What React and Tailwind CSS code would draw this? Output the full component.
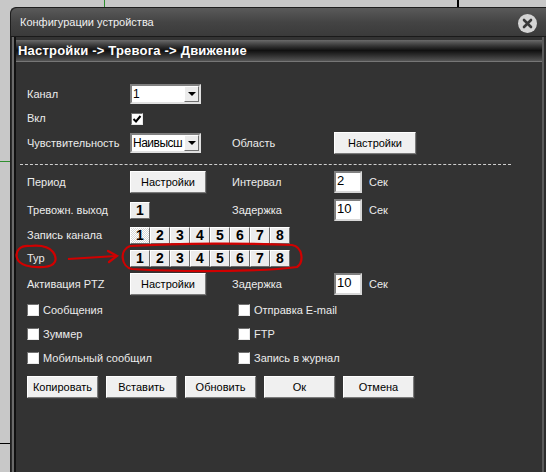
import React from "react";

const font = { fontFamily: '"Liberation Sans", Arial, sans-serif' };

function Btn({ children, className = "" }) {
  return (
    <div
      className={`flex items-center justify-center bg-[#f0f0f0] text-[11px] text-black border border-t-white border-l-white border-r-[#7a7a7a] border-b-[#7a7a7a] shadow-[1px_1px_0_#404040] ${className}`}
    >
      {children}
    </div>
  );
}

function Input({ value }) {
  return (
    <div className="w-[28px] h-[22px] bg-white border-2 border-t-[#808080] border-l-[#808080] border-r-[#d8d8d8] border-b-[#d8d8d8] text-[13px] text-black leading-[16px] pl-[1px]">
      {value}
    </div>
  );
}

function Select({ value }) {
  return (
    <div className="w-[71px] h-[20px] bg-white border-2 border-t-[#808080] border-l-[#808080] border-r-[#e0e0e0] border-b-[#e0e0e0] flex items-stretch">
      <div className="flex-1 text-[12px] tracking-[-0.5px] text-black leading-[16px] pl-[1px] overflow-hidden whitespace-nowrap">
        {value}
      </div>
      <div className="w-[15px] bg-[#ececec] border border-t-white border-l-white border-r-[#707070] border-b-[#707070] flex items-center justify-center">
        <div className="w-0 h-0 border-l-[4px] border-r-[4px] border-t-[4px] border-l-transparent border-r-transparent border-t-black" />
      </div>
    </div>
  );
}

function Check({ checked }) {
  return (
    <div className="w-[12px] h-[12px] bg-white border border-t-[#707070] border-l-[#707070] border-r-[#e8e8e8] border-b-[#e8e8e8] flex items-center justify-center">
      {checked && (
        <svg width="10" height="10" viewBox="0 0 10 10">
          <path d="M1.5 5 L4 7.5 L8.5 2" stroke="#000" strokeWidth="2" fill="none" />
        </svg>
      )}
    </div>
  );
}

function NumBtn({ n, pressed }) {
  return (
    <div
      className={`w-[20px] h-[17px] flex items-center justify-center text-[14px] font-bold text-black border border-t-white border-l-white border-r-[#6a6a6a] border-b-[#6a6a6a] ${
        pressed
          ? "bg-[conic-gradient(#ffffff_25%,#d6d6d6_0_50%,#ffffff_0_75%,#d6d6d6_0)] bg-[length:2px_2px]"
          : "bg-[#ececec]"
      }`}
    >
      {n}
    </div>
  );
}

function NumRow({ first }) {
  return (
    <div className="flex">
      {[1, 2, 3, 4, 5, 6, 7, 8].map((n) => (
        <NumBtn key={n} n={n} pressed={first && n === 1} />
      ))}
    </div>
  );
}

function Row({ h, label, children, label2, right }) {
  return (
    <div className={`flex items-center ${h}`}>
      <div className="w-[103px] text-[11px] text-[#ececec] whitespace-nowrap">{label}</div>
      <div className="w-[102px] flex items-center">{children}</div>
      {label2 !== undefined && (
        <>
          <div className="w-[102px] text-[11px] text-[#ececec]">{label2}</div>
          <div className="flex items-center gap-[7px] text-[11px] text-[#ececec]">{right}</div>
        </>
      )}
    </div>
  );
}

function CheckLabel({ label }) {
  return (
    <div className="flex items-center gap-[4px] text-[11px] text-[#ececec] whitespace-nowrap">
      <Check />
      {label}
    </div>
  );
}

export default function App() {
  return (
    <div className="relative w-[546px] h-[472px] bg-[#c8c8c8] overflow-hidden" style={font}>
      {/* desktop lines behind the window */}
      <div className="absolute left-[104px] top-0 w-[1px] h-[7px] bg-[#2f8f2f]" />
      <div className="absolute left-[457px] top-0 w-[2px] h-[7px] bg-black" />
      <div className="absolute left-0 top-[161px] w-[10px] h-[1px] bg-[#2f8f2f]" />
      <div className="absolute left-0 top-[443px] w-[10px] h-[1px] bg-black" />

      <div className="ml-[10px] mt-[7px] w-[560px] h-[480px] rounded-tl-[6px] bg-[#2c2c2c] border-l border-t border-[#1e1e1e] flex flex-col">
        {/* title bar */}
        <div className="h-[29px] flex items-center pl-[9px] rounded-tl-[6px] bg-gradient-to-b from-[#5a5a5a] via-[#444444] to-[#3a3a3a] border-b border-[#1a1a1a]">
          <span className="text-[11px] text-[#f0f0f0]">Конфигурации устройства</span>
          <div className="ml-auto mr-[33px] mt-[2px] w-[19px] h-[19px] rounded-full bg-[#d4d4d4] flex items-center justify-center">
            <svg width="11" height="11" viewBox="0 0 11 11">
              <path d="M2 2 L9 9 M9 2 L2 9" stroke="#3a3a3a" strokeWidth="2.6" strokeLinecap="round" />
            </svg>
          </div>
        </div>

        {/* inner panel */}
        <div className="ml-[3px] w-[530px] flex-1 border-l-2 border-r-2 border-l-[#111] border-r-[#5a5a5a] bg-[#333333] shadow-[-2px_0_0_#6a6a6a]">
          <div className="mt-[3px] h-[22px] flex items-center pl-[2px] bg-gradient-to-b from-[#6a6a6a] via-[#111111] to-[#555555] border-b border-[#777]">
            <span className="text-[13px] font-bold text-white tracking-[0.2px]">
              Настройки -&gt; Тревога -&gt; Движение
            </span>
          </div>

          <div className="pl-[11px] pt-[20px]">
            <Row h="h-[24px]" label="Канал">
              <Select value="1" />
            </Row>
            <Row h="h-[25px]" label="Вкл">
              <div className="pl-[1px]">
                <Check checked />
              </div>
            </Row>
            <Row h="h-[24px]" label="Чувствительность" label2="Область" right={<Btn className="w-[82px] h-[22px]">Настройки</Btn>}>
              <Select value="Наивысш" />
            </Row>

            <div className="h-[13px] pt-[9px]">
              <div className="w-[491px] -ml-[7px] border-t border-dashed border-[#cfcfcf]" />
            </div>

            <Row
              h="h-[28px]"
              label="Период"
              label2="Интервал"
              right={
                <>
                  <Input value="2" />
                  Сек
                </>
              }
            >
              <Btn className="w-[76px] h-[22px]">Настройки</Btn>
            </Row>
            <Row
              h="h-[28px]"
              label="Тревожн. выход"
              label2="Задержка"
              right={
                <>
                  <Input value="10" />
                  Сек
                </>
              }
            >
              <NumBtn n={1} />
            </Row>
            <Row h="h-[23px]" label="Запись канала">
              <NumRow first />
            </Row>
            <Row h="h-[23px]" label="Тур">
              <NumRow />
            </Row>
            <Row
              h="h-[28px]"
              label="Активация PTZ"
              label2="Задержка"
              right={
                <>
                  <Input value="10" />
                  Сек
                </>
              }
            >
              <Btn className="w-[76px] h-[22px]">Настройки</Btn>
            </Row>

            <div className="grid grid-cols-[211px_1fr] grid-rows-[24px_24px_24px] items-center">
              <CheckLabel label="Сообщения" />
              <CheckLabel label="Отправка E-mail" />
              <CheckLabel label="Зуммер" />
              <CheckLabel label="FTP" />
              <CheckLabel label="Мобильный сообщил" />
              <CheckLabel label="Запись в журнал" />
            </div>

            <div className="mt-[6px] flex gap-[8px]">
              <Btn className="w-[71px] h-[22px]">Копировать</Btn>
              <Btn className="w-[71px] h-[22px]">Вставить</Btn>
              <Btn className="w-[71px] h-[22px]">Обновить</Btn>
              <Btn className="w-[71px] h-[22px]">Ок</Btn>
              <Btn className="w-[71px] h-[22px]">Отмена</Btn>
            </div>
          </div>
        </div>
      </div>

      {/* red hand-drawn annotation */}
      <svg className="absolute left-0 top-0 pointer-events-none" width="546" height="472" viewBox="0 0 546 472">
        <path
          d="M30 246 C20 245 15 251 17 258 C19 265 30 268 44 267 C56 266 58 259 53 252 C49 247 40 245 30 246"
          stroke="#d10000"
          strokeWidth="2.2"
          fill="none"
        />
        <path d="M68 259 C85 258 100 257 116 256" stroke="#d10000" strokeWidth="2.2" fill="none" />
        <path d="M108 251 L117 256 L109 262" stroke="#d10000" strokeWidth="2.2" fill="none" strokeLinecap="round" />
        <path
          d="M130 246 C180 243 250 243 292 245 C303 247 304 262 297 267 C260 272 180 272 132 269 C121 267 119 250 130 246"
          stroke="#d10000"
          strokeWidth="2.2"
          fill="none"
        />
      </svg>
    </div>
  );
}
